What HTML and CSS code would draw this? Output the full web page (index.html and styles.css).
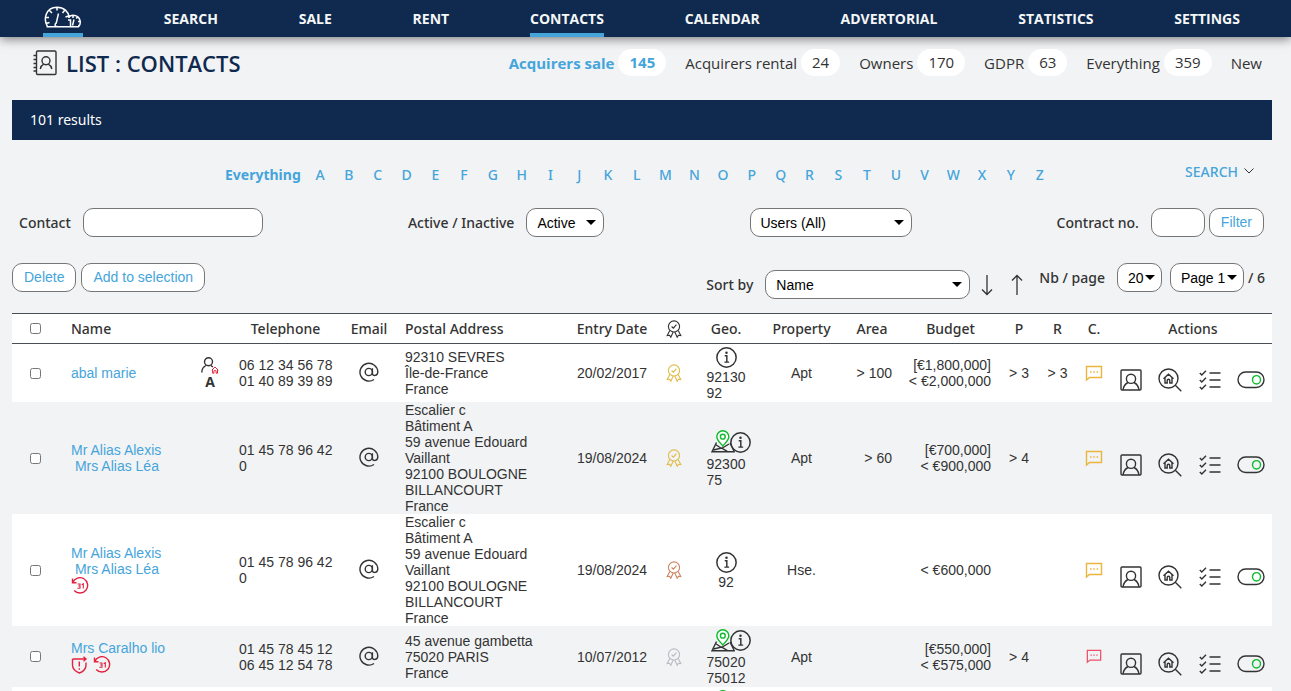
FILE: index.html
```html
<!DOCTYPE html>
<html lang="en">
<head>
  <meta charset="UTF-8">
  <meta name="viewport" content="width=device-width, initial-scale=1.0">
  <title>List : Contacts</title>
  <link rel="stylesheet" href="styles.css">
</head>
<body>
  <!-- icon sprite -->
  <svg class="sprite" aria-hidden="true">
    <symbol id="i-at" viewBox="0 0 20 20"><circle cx="9.800" cy="10" r="3.600"/><path d="M13.400 6.200v5.300c0 3 5.400 2.600 5.400-1.500A8.900 8.900 0 1 0 15 17.500"/></symbol>
    <symbol id="i-medal" viewBox="0 0 16 18"><circle cx="8" cy="6.500" r="5.600"/><path d="M5.600 6.500l1.800 1.700 3-3.500M3.800 10.600L1.200 15.600l2.400-.3 1.200 2 2.300-5M12.200 10.600l2.600 5-2.400-.3-1.200 2-2.300-5"/></symbol>
    <symbol id="i-info" viewBox="0 0 20 20"><circle cx="10" cy="10" r="9.200"/><path d="M8.300 8.400h2v6M8 14.400h4.500"/><circle class="dot" cx="10" cy="5.400" r="1.200"/></symbol>
    <symbol id="i-map" viewBox="0 0 24 24"><path d="M5.500 12.500L1 21.800h22.300L19 13M4.500 14.500l6 4 7.500-4.500M2.500 20l8-2 6.500 3.800"/><path class="pin" d="M11.800 16C8.500 12 5.800 9.800 5.800 6.700a6 6 0 0 1 12 0c0 3.100-2.700 5.300-6 9.300z"/><circle class="ring" cx="11.800" cy="6.700" r="2.400"/></symbol>
    <symbol id="i-chat" viewBox="0 0 18 17"><path d="M1.500 1.500h15v11H4.500l-3 2.500z"/><path d="M5 7h1.500M8.300 7h1.500M11.600 7h1.500"/></symbol>
    <symbol id="i-card" viewBox="0 0 22 22"><rect x="1" y="1" width="20" height="20" rx="1"/><circle cx="11" cy="9.800" r="4.600"/><path d="M3 21c.5-4 2.500-6.300 5-7.500M19 21c-.5-4-2.500-6.300-5-7.500"/></symbol>
    <symbol id="i-find" viewBox="0 0 24 24"><circle cx="10.500" cy="10.500" r="9.500"/><path d="M17.300 17.300l6 6M5.500 10.800l5-4.600 5 4.600M7 9.800v5.200h2.200v-2.500a1.300 1.300 0 0 1 2.600 0V15H14V9.800"/></symbol>
    <symbol id="i-tasks" viewBox="0 0 22 20"><path d="M.8 3l2 2L7 .8M.8 10l2 2L7 7.800M.8 17l2 2L7 14.800M10.500 3h11M10.500 10h11M10.500 17h11"/></symbol>
    <symbol id="i-toggle" viewBox="0 0 28 18"><rect x="1" y="1" width="26" height="15.500" rx="7.700"/><ellipse class="knob" cx="19.500" cy="8.800" rx="4" ry="4.200"/></symbol>
    <symbol id="i-recall" viewBox="0 0 18 18"><path d="M1.500 1.500v4.300h4M1.800 5.500A7.700 7.700 0 1 1 3.200 13.500"/><path class="thin" d="M6.500 7H9v2H7.300M9 9v2.200H6.300M10.700 7.700l1.600-.9v4.600"/></symbol>
    <symbol id="i-shield" viewBox="0 0 18 18"><path d="M1.500 3h13M12.500.8L15 3l-2.500 2.200M1.500 3v6c0 4 3 6.500 7 8 4-1.500 6.500-4 6.500-8V6.500M8.300 5.500v5M8.300 12.300v1.500"/></symbol>
    <symbol id="i-client" viewBox="0 0 18 17"><circle cx="7.500" cy="4.800" r="4"/><path d="M.8 15.500c0-4 1.700-5.700 4.200-7M10 8.700l2 1.300"/><path class="house" d="M10.800 13.200L14 10l3.300 3.200M11.600 12.800v3.400h1.300v-1.700a1.100 1.100 0 0 1 2.200 0v1.700h1.400v-3.400"/></symbol>
    <symbol id="i-book" viewBox="0 0 24 26"><rect x="3.500" y="1" width="19.500" height="23.500" rx="1.200"/><circle cx="13" cy="10.800" r="4"/><path d="M7.300 19c.5-2.700 1.700-4 3.500-4.800M18.800 19c-.5-2.700-1.700-4-3.500-4.800M.5 5.500h3M.5 9.500h3M.5 13.500h3M.5 17.500h3M.5 21h3"/></symbol>
  </svg>

  <nav class="topnav">
    <a href="#" class="home active" aria-label="Dashboard">
      <svg class="logo" viewBox="0 0 38 23"><path d="M3.500 20.500C-.5 14.500.8 1.200 13 1.200c7 0 11.500 4.500 12.300 10.300M2.500 20.800h32c3-3 2.500-11.300-5.500-11.500-2 0-3.500.8-4.500 2.500M13 1.200v3.300M5.500 4.500L8 7M1.500 11.500H5M2 17.500l3.500-1M20.500 4.500L18.500 7M24.500 10l-3 1M14.500 7.500l-2.200 9.500a1.700 1.700 0 1 0 1.500 3.500M24 14h2.500v6.500M29 9.500v2.500M36.500 15.500h-2.500M33.500 11l-1.300 1.500M30 13.500l-1.500 6M36 19.500h-2"/></svg>
    </a>
    <a href="#">SEARCH</a>
    <a href="#">SALE</a>
    <a href="#">RENT</a>
    <a href="#" class="active">CONTACTS</a>
    <a href="#">CALENDAR</a>
    <a href="#">ADVERTORIAL</a>
    <a href="#">STATISTICS</a>
    <a href="#">SETTINGS</a>
  </nav>

  <main>
    <header class="page-head">
      <h1><svg class="icon book"><use href="#i-book"/></svg>LIST : CONTACTS</h1>
      <div class="tabs">
        <a href="#" class="current">Acquirers sale <span>145</span></a>
        <a href="#">Acquirers rental <span>24</span></a>
        <a href="#">Owners <span>170</span></a>
        <a href="#">GDPR <span>63</span></a>
        <a href="#">Everything <span>359</span></a>
        <a href="#">New</a>
      </div>
    </header>

    <div class="results">101 results</div>

    <div class="alphabar">
      <div class="alphabet">
        <a href="#" class="all">Everything</a>
        <div class="letters">
          <a href="#">A</a><a href="#">B</a><a href="#">C</a><a href="#">D</a><a href="#">E</a><a href="#">F</a><a href="#">G</a><a href="#">H</a><a href="#">I</a><a href="#">J</a><a href="#">K</a><a href="#">L</a><a href="#">M</a><a href="#">N</a><a href="#">O</a><a href="#">P</a><a href="#">Q</a><a href="#">R</a><a href="#">S</a><a href="#">T</a><a href="#">U</a><a href="#">V</a><a href="#">W</a><a href="#">X</a><a href="#">Y</a><a href="#">Z</a>
        </div>
      </div>
      <a href="#" class="more">SEARCH <svg class="chevron" viewBox="0 0 10 6"><path d="M.5.500l4.500 4.500L9.500.500"/></svg></a>
    </div>

    <form class="filters">
      <div class="field">
        <label for="contact">Contact</label>
        <input type="text" id="contact" class="w-contact">
      </div>
      <div class="field">
        <label for="state">Active / Inactive</label>
        <span class="select w-state"><select id="state"><option>Active</option><option>Inactive</option></select></span>
      </div>
      <div class="field">
        <span class="select w-users"><select aria-label="Users"><option>Users (All)</option></select></span>
      </div>
      <div class="field">
        <label for="contract">Contract no.</label>
        <input type="text" id="contract" class="w-contract">
        <button type="button" class="btn">Filter</button>
      </div>
    </form>

    <div class="tools">
      <div class="group">
        <button type="button" class="btn">Delete</button>
        <button type="button" class="btn">Add to selection</button>
      </div>
      <div class="group right">
        <div class="sort">
          <label for="sort">Sort by</label>
          <span class="select w-sort"><select id="sort"><option>Name</option></select></span>
          <a href="#" aria-label="Descending"><svg class="arrow" viewBox="0 0 12 22"><path d="M6 1v19M1 15.500l5 5 5-5"/></svg></a>
          <a href="#" aria-label="Ascending"><svg class="arrow" viewBox="0 0 12 22"><path d="M6 21V2M1 6.500l5-5 5 5"/></svg></a>
        </div>
        <div class="paging">
          <label for="nb">Nb / page</label>
          <span class="select tight w-nb"><select id="nb"><option>20</option></select></span>
          <span class="select tight w-page"><select aria-label="Page"><option>Page 1</option></select></span>
          <span class="total">/ 6</span>
        </div>
      </div>
    </div>

    <table class="contacts">
      <colgroup>
        <col class="c-check"><col class="c-name"><col class="c-type"><col class="c-tel"><col class="c-mail"><col class="c-post"><col class="c-date"><col class="c-medal"><col class="c-geo"><col class="c-prop"><col class="c-area"><col class="c-budget"><col class="c-p"><col class="c-r"><col class="c-c"><col class="c-act">
      </colgroup>
      <thead>
        <tr>
          <th><input type="checkbox" aria-label="Select all"></th>
          <th class="name">Name</th>
          <th></th>
          <th>Telephone</th>
          <th>Email</th>
          <th class="post">Postal Address</th>
          <th>Entry Date</th>
          <th><svg class="icon medal"><use href="#i-medal"/></svg></th>
          <th>Geo.</th>
          <th>Property</th>
          <th>Area</th>
          <th>Budget</th>
          <th>P</th>
          <th>R</th>
          <th>C.</th>
          <th>Actions</th>
        </tr>
      </thead>
      <tbody>
        <tr>
          <td><input type="checkbox" aria-label="Select abal marie"></td>
          <td class="name"><a href="#">abal marie</a></td>
          <td class="type"><svg class="icon client"><use href="#i-client"/></svg><b>A</b></td>
          <td class="tel">06 12 34 56 78<br>01 40 89 39 89</td>
          <td><svg class="icon at"><use href="#i-at"/></svg></td>
          <td class="post">92310 SEVRES<br>Île-de-France<br>France</td>
          <td>20/02/2017</td>
          <td><svg class="icon medal gold"><use href="#i-medal"/></svg></td>
          <td><div class="geo"><span><svg class="icon info"><use href="#i-info"/></svg></span><p>92130<br>92</p></div></td>
          <td>Apt</td>
          <td class="area">&gt; 100</td>
          <td class="budget">[€1,800,000]<br>&lt; €2,000,000</td>
          <td>&gt; 3</td>
          <td>&gt; 3</td>
          <td><svg class="icon chat"><use href="#i-chat"/></svg></td>
          <td><div class="actions"><a href="#" aria-label="Card"><svg class="icon card"><use href="#i-card"/></svg></a><a href="#" aria-label="Match"><svg class="icon find"><use href="#i-find"/></svg></a><a href="#" aria-label="Tasks"><svg class="icon tasks"><use href="#i-tasks"/></svg></a><a href="#" aria-label="Active"><svg class="icon toggle"><use href="#i-toggle"/></svg></a></div></td>
        </tr>
        <tr>
          <td><input type="checkbox" aria-label="Select Alias"></td>
          <td class="name"><a href="#">Mr Alias Alexis<br>&nbsp;Mrs Alias Léa</a></td>
          <td></td>
          <td class="tel">01 45 78 96 42<br>0</td>
          <td><svg class="icon at"><use href="#i-at"/></svg></td>
          <td class="post">Escalier c<br>Bâtiment A<br>59 avenue Edouard Vaillant<br>92100 BOULOGNE BILLANCOURT<br>France</td>
          <td>19/08/2024</td>
          <td><svg class="icon medal gold"><use href="#i-medal"/></svg></td>
          <td><div class="geo"><span class="located"><svg class="icon map"><use href="#i-map"/></svg><svg class="icon info"><use href="#i-info"/></svg></span><p>92300<br>75</p></div></td>
          <td>Apt</td>
          <td class="area">&gt; 60</td>
          <td class="budget">[€700,000]<br>&lt; €900,000</td>
          <td>&gt; 4</td>
          <td></td>
          <td><svg class="icon chat"><use href="#i-chat"/></svg></td>
          <td><div class="actions"><a href="#" aria-label="Card"><svg class="icon card"><use href="#i-card"/></svg></a><a href="#" aria-label="Match"><svg class="icon find"><use href="#i-find"/></svg></a><a href="#" aria-label="Tasks"><svg class="icon tasks"><use href="#i-tasks"/></svg></a><a href="#" aria-label="Active"><svg class="icon toggle"><use href="#i-toggle"/></svg></a></div></td>
        </tr>
        <tr>
          <td><input type="checkbox" aria-label="Select Alias"></td>
          <td class="name"><a href="#">Mr Alias Alexis<br>&nbsp;Mrs Alias Léa</a><div class="flags"><svg class="icon flag"><use href="#i-recall"/></svg></div></td>
          <td></td>
          <td class="tel">01 45 78 96 42<br>0</td>
          <td><svg class="icon at"><use href="#i-at"/></svg></td>
          <td class="post">Escalier c<br>Bâtiment A<br>59 avenue Edouard Vaillant<br>92100 BOULOGNE BILLANCOURT<br>France</td>
          <td>19/08/2024</td>
          <td><svg class="icon medal bronze"><use href="#i-medal"/></svg></td>
          <td><div class="geo"><span><svg class="icon info"><use href="#i-info"/></svg></span><p>92</p></div></td>
          <td>Hse.</td>
          <td class="area"></td>
          <td class="budget">&lt; €600,000</td>
          <td></td>
          <td></td>
          <td><svg class="icon chat"><use href="#i-chat"/></svg></td>
          <td><div class="actions"><a href="#" aria-label="Card"><svg class="icon card"><use href="#i-card"/></svg></a><a href="#" aria-label="Match"><svg class="icon find"><use href="#i-find"/></svg></a><a href="#" aria-label="Tasks"><svg class="icon tasks"><use href="#i-tasks"/></svg></a><a href="#" aria-label="Active"><svg class="icon toggle"><use href="#i-toggle"/></svg></a></div></td>
        </tr>
        <tr>
          <td><input type="checkbox" aria-label="Select Caralho"></td>
          <td class="name"><a href="#">Mrs Caralho lio</a><div class="flags"><svg class="icon flag"><use href="#i-shield"/></svg><svg class="icon flag"><use href="#i-recall"/></svg></div></td>
          <td></td>
          <td class="tel">01 45 78 45 12<br>06 45 12 54 78</td>
          <td><svg class="icon at"><use href="#i-at"/></svg></td>
          <td class="post">45 avenue gambetta<br>75020 PARIS<br>France</td>
          <td>10/07/2012</td>
          <td><svg class="icon medal silver"><use href="#i-medal"/></svg></td>
          <td><div class="geo"><span class="located"><svg class="icon map"><use href="#i-map"/></svg><svg class="icon info"><use href="#i-info"/></svg></span><p>75020<br>75012</p></div></td>
          <td>Apt</td>
          <td class="area"></td>
          <td class="budget">[€550,000]<br>&lt; €575,000</td>
          <td>&gt; 4</td>
          <td></td>
          <td><svg class="icon chat late"><use href="#i-chat"/></svg></td>
          <td><div class="actions"><a href="#" aria-label="Card"><svg class="icon card"><use href="#i-card"/></svg></a><a href="#" aria-label="Match"><svg class="icon find"><use href="#i-find"/></svg></a><a href="#" aria-label="Tasks"><svg class="icon tasks"><use href="#i-tasks"/></svg></a><a href="#" aria-label="Active"><svg class="icon toggle"><use href="#i-toggle"/></svg></a></div></td>
        </tr>
        <tr>
          <td colspan="8"></td>
          <td><div class="geo"><span class="located"><svg class="icon map"><use href="#i-map"/></svg><svg class="icon info"><use href="#i-info"/></svg></span></div></td>
          <td colspan="7"></td>
        </tr>
      </tbody>
    </table>
  </main>
</body>
</html>
```

FILE: styles.css
```css
* { box-sizing: border-box; margin: 0; padding: 0; }
body {
  height: 100vh;
  overflow: hidden;
  background: #f2f3f5;
  color: #333;
  font-family: 'Noto Sans', sans-serif;
  font-size: 14px;
}
a { color: #45a5db; text-decoration: none; }
.sprite { display: none; }
.icon {
  display: inline-block;
  vertical-align: middle;
  fill: none;
  stroke: #333;
  stroke-width: 1.4;
}

/* top navigation */
.topnav {
  display: flex;
  justify-content: space-between;
  height: 37px;
  padding: 0 51px 0 43px;
  background: #0f2a4e;
  box-shadow: 0 2px 10px rgba(0, 0, 0, 0.5);
}
.topnav a {
  height: 37px;
  line-height: 38px;
  color: #f4f6f8;
  font-family: 'Open Sans', sans-serif;
  font-weight: 700;
}
.topnav a.active { border-bottom: 4px solid #45a5db; }
.topnav .home {
  width: 40px;
  padding-top: 6px;
  line-height: 0;
}
.logo {
  width: 38px;
  height: 23px;
  margin-left: 1px;
  fill: none;
  stroke: #fff;
  stroke-width: 1.5;
}

main { padding: 0 19px 0 12px; }

/* title and tabs */
.page-head {
  display: flex;
  justify-content: space-between;
  align-items: center;
  height: 63px;
  padding: 0 10px 12px 21px;
}
h1 {
  display: flex;
  align-items: center;
  gap: 9px;
  color: #0f2a4e;
  font-family: 'Open Sans', sans-serif;
  font-size: 22px;
  font-weight: 600;
  line-height: 24px;
}
.book { width: 24px; height: 26px; }
.tabs {
  display: flex;
  gap: 19px;
  font-family: 'Open Sans', sans-serif;
  font-size: 15px;
}
.tabs a {
  display: flex;
  align-items: center;
  gap: 4px;
  color: #333;
}
.tabs span {
  padding: 0 11px;
  border-radius: 14px;
  background: #fff;
  line-height: 27px;
}
.tabs .current { color: #45a5db; font-weight: 700; }

.results {
  height: 40px;
  padding-left: 18px;
  background: #0f2a4e;
  color: #fff;
  line-height: 40px;
}

/* alphabet */
.alphabar {
  display: flex;
  align-items: center;
  margin-top: 19px;
  height: 30px;
  padding: 0 18px 0 213px;
  font-weight: 500;
}
.alphabet {
  flex: 1;
  display: flex;
  margin-right: 131px;
}
.alphabet .all { font-weight: 700; }
.letters {
  flex: 1;
  display: grid;
  grid-template-columns: repeat(26, 1fr);
  margin-left: 5px;
  text-align: center;
}
.more {
  display: flex;
  align-items: center;
  gap: 6px;
  padding-bottom: 6px;
}
.chevron {
  width: 10px;
  height: 6px;
  fill: none;
  stroke: #333;
}

/* filters */
.filters {
  display: flex;
  justify-content: space-between;
  margin-top: 19px;
  padding: 0 8px 0 7px;
}
.field, .sort, .paging, .group { display: flex; align-items: center; }
label { margin-right: 12px; font-weight: 500; }
input[type="text"], select, .btn {
  height: 29px;
  border: 1px solid #767676;
  border-radius: 10px;
  background: #fff;
  font-family: 'Liberation Sans', Arial, sans-serif;
  font-size: 14px;
}
.btn {
  padding: 0 11px 2px;
  color: #45a5db;
  cursor: pointer;
}
.field .btn { margin-left: 4px; }
.select { position: relative; }
select {
  width: 100%;
  padding: 0 10px;
  appearance: none;
  color: #000;
  display: block;
}
.select::after {
  content: '';
  position: absolute;
  top: 12px;
  right: 8px;
  border: 5px solid transparent;
  border-top-color: #000;
  border-bottom: 0;
  pointer-events: none;
}
.tight::after { right: 7px; }
.tight select { padding-right: 0; }
.w-contact { width: 180px; }
.w-state { width: 78px; }
.w-users { width: 162px; }
.w-contract { width: 54px; }
.w-sort { width: 205px; }
.w-nb { width: 45px; }
.w-page { width: 74px; }

.tools {
  display: flex;
  justify-content: space-between;
  margin-top: 26px;
  padding-right: 7px;
}
.group { align-items: flex-start; gap: 5px; }
.right { gap: 16px; }
.sort { padding-top: 7px; }
.sort a { display: flex; }
.arrow {
  width: 12px;
  height: 22px;
  margin-left: 11px;
  fill: none;
  stroke: #333;
  stroke-width: 1.3;
}
.sort a + a { margin-left: 7px; }
.w-page { margin-left: 8px; }
.total { margin-left: 4px; font-weight: 500; }

/* contacts table */
.contacts {
  width: 100%;
  margin-top: 14px;
  table-layout: fixed;
  border-collapse: collapse;
  font-family: 'Liberation Sans', Arial, sans-serif;
  line-height: 16px;
}
.c-check { width: 47px; }
.c-type { width: 36px; }
.c-tel { width: 115px; }
.c-mail { width: 52px; }
.c-post { width: 170px; }
.c-date { width: 94px; }
.c-medal { width: 30px; }
.c-geo { width: 74px; }
.c-prop { width: 77px; }
.c-area { width: 64px; }
.c-budget { width: 93px; }
.c-p { width: 44px; }
.c-r { width: 33px; }
.c-c { width: 40px; }
.c-act { width: 158px; }
th {
  height: 30px;
  border-top: 1px solid #4a4f57;
  border-bottom: 1px solid #4a4f57;
  background: #fff;
  font-family: 'Noto Sans', sans-serif;
  font-weight: 500;
}
td { text-align: center; vertical-align: middle; }
tbody tr:nth-child(odd) { background: #fff; }
th.name, td.name { padding-left: 12px; text-align: left; }
th.post, td.post { padding-left: 10px; text-align: left; }
.tel { padding-left: 11px; text-align: left; }
.area { padding-right: 12px; text-align: right; }
.budget { padding-right: 6px; text-align: right; }
td input, th input {
  width: 11px;
  height: 11px;
  margin-bottom: 2px;
  vertical-align: middle;
}
.type b {
  display: block;
  font-family: 'Open Sans', sans-serif;
}
.client { width: 18px; height: 17px; }
.at { width: 20px; height: 20px; margin-bottom: 2px; }
.medal { width: 16px; height: 18px; stroke-width: 1.1; }
.gold { stroke: #e0bc4a; }
.bronze { stroke: #cd8560; }
.silver { stroke: #b9bcc2; }
.chat { width: 18px; height: 17px; stroke: #e9b53c; }
.late { width: 16px; stroke: #ec5069; }
.flags {
  display: flex;
  gap: 4px;
  height: 18px;
  align-items: center;
}
.flag { width: 18px; height: 18px; stroke: #e3223f; }
.geo {
  display: flex;
  flex-direction: column;
  align-items: center;
  padding: 1px 0;
  text-align: left;
}
.geo span {
  display: flex;
  align-items: center;
  height: 24px;
}
.geo .located { height: 27px; padding-left: 9px; }
.info { width: 21px; height: 21px; }
.map { width: 24px; height: 24px; margin-right: -5px; }
.actions {
  display: flex;
  justify-content: space-between;
  align-items: center;
  padding: 14px 7px 0 6px;
}
.actions a { display: flex; }
.card { width: 22px; height: 22px; }
.find { width: 24px; height: 24px; }
.tasks { width: 22px; height: 20px; }
.toggle { width: 28px; height: 18px; }
.pin, .ring { stroke: #0dbb2c; }
.pin { fill: #fff; }
.knob { stroke: #0dbb2c; }
.house { stroke: #e3223f; stroke-width: 1; }
.dot { fill: #333; stroke: none; }
.thin { stroke-width: 1.1; }
```
